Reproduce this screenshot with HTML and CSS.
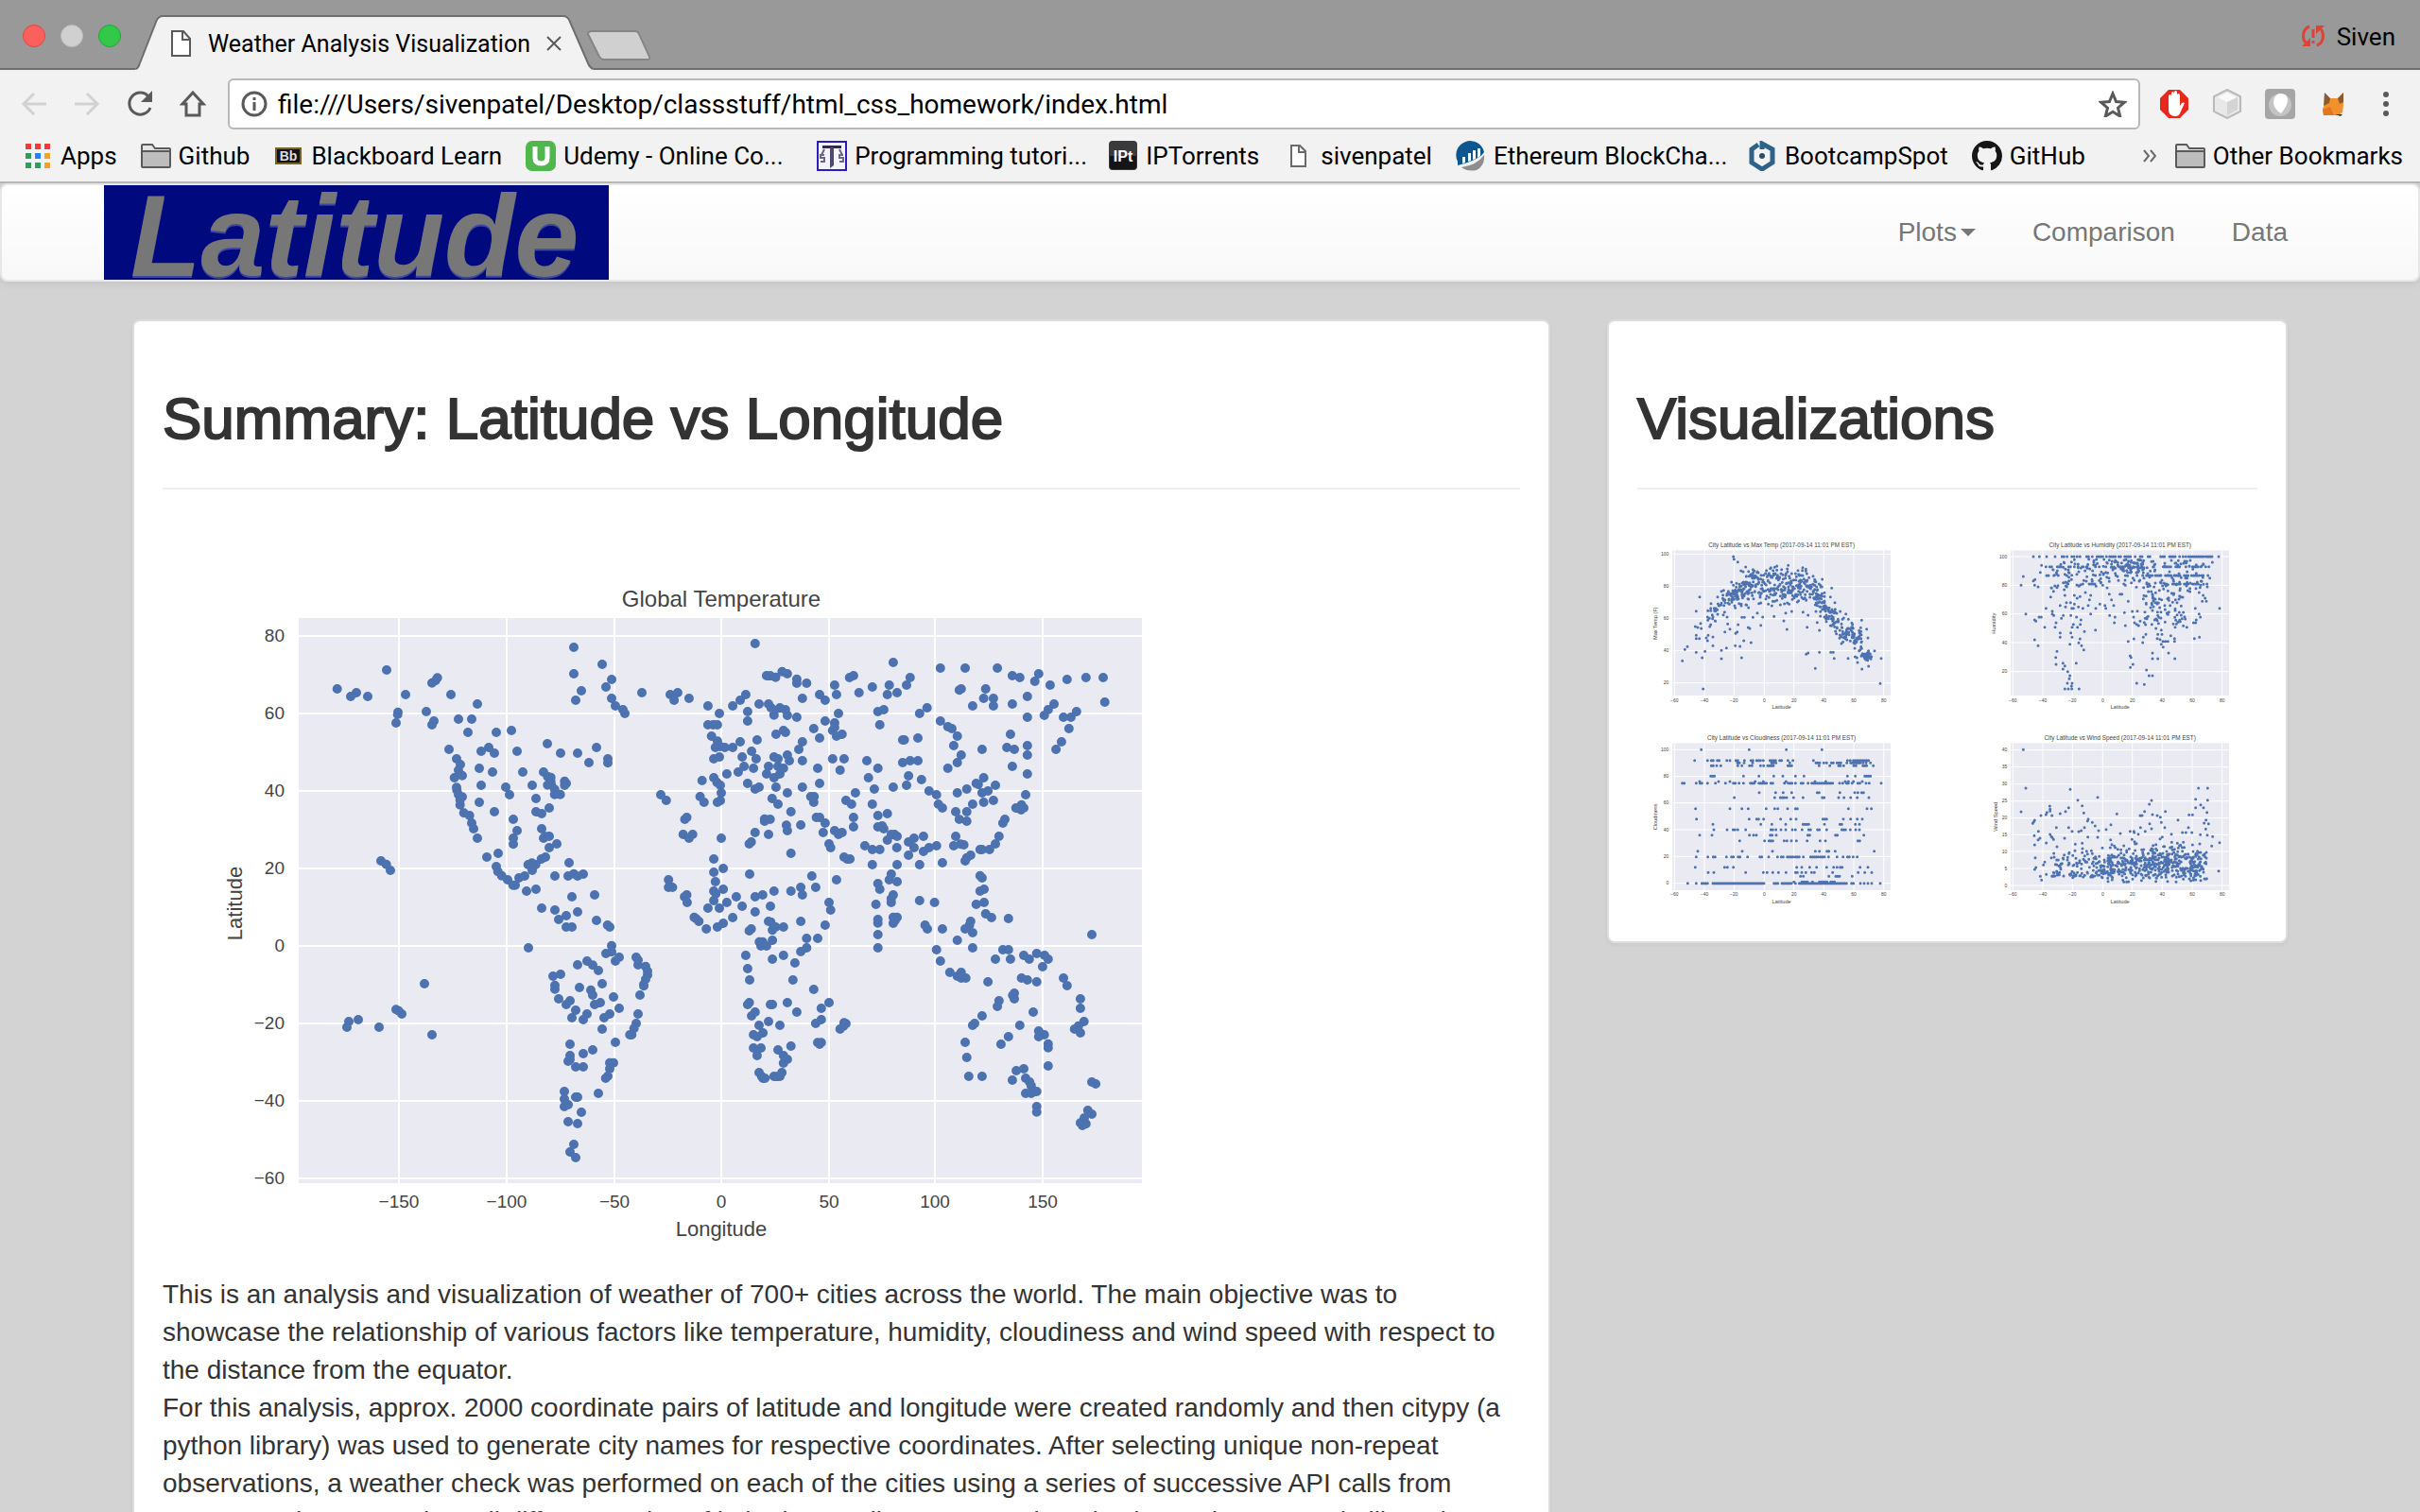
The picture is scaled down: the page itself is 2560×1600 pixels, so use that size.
FILE: index.html
```html
<!DOCTYPE html>
<html lang="en">
<head>
<meta charset="utf-8">
<title>Weather Analysis Visualization</title>
<link rel="stylesheet" href="styles.css">
</head>
<body>
<div class="window">
  <header class="chrome">
    <div class="tabbar">
      <div class="lights"><button class="light red" aria-label="Close window"></button><button class="light gray" aria-label="Minimize"></button><button class="light green" aria-label="Zoom"></button></div>
      <div class="tab">
        <svg class="tab-shape" viewBox="0 0 484 58" aria-hidden="true"><path d="M0 57Q3 56 4 52L22 6Q24 1 29 1H452Q457 1 459 6L479 52Q481 56 484 57V58H0Z" fill="#f2f2f2"/><path d="M0 57Q3 56 4 52L22 6Q24 1 29 1H452Q457 1 459 6L479 52Q481 56 484 57" fill="none" stroke="#6e6e6e" stroke-width="2"/></svg>
        <svg class="page-icon" viewBox="0 0 22 30" aria-hidden="true"><path d="M2 2h12l7 8v18H2zM13 2v9h8" fill="#fff" stroke="#5a5a5a" stroke-width="2"/></svg>
        <span class="tab-title">Weather Analysis Visualization</span>
        <button class="tab-close" aria-label="Close tab"><svg viewBox="0 0 16 16"><path d="M1 1l14 14M15 1L1 15" stroke="#5a5a5a" stroke-width="2"/></svg></button>
      </div>
      <button class="newtab" aria-label="New tab"><svg viewBox="0 0 68 32"><path d="M5 1h46q3 0 4 3l11 24q1 3-2 3H18q-3 0-5-3L1 4q0-3 4-3z" fill="#d0d0d0" stroke="#858585" stroke-width="2"/></svg></button>
      <button class="profile"><svg viewBox="0 0 26 24" aria-hidden="true"><g fill="none" stroke="#db4437" stroke-width="3"><path d="M9 2C1 5 1 16 6 20M17 22c8-3 8-14 3-18M13 5v9M13 17v3"/></g><path d="M1 23h9v-9zM25 1h-9v9z" fill="#db4437"/></svg>Siven</button>
    </div>
    <div class="toolbar">
      <div class="navbtns">
        <button aria-label="Back"><svg viewBox="0 0 28 28"><path d="M27 14H3M14 3L3 14l11 11" fill="none" stroke="#d2d2d2" stroke-width="3"/></svg></button>
        <button aria-label="Forward"><svg viewBox="0 0 28 28"><path d="M1 14h24M14 3l11 11-11 11" fill="none" stroke="#d2d2d2" stroke-width="3"/></svg></button>
        <button aria-label="Reload"><svg viewBox="0 0 28 28"><path d="M23 6A11.500 11.500 0 1 0 25 18" fill="none" stroke="#5a5a5a" stroke-width="3"/><path d="M27 0v12H15z" fill="#5a5a5a"/></svg></button>
        <button aria-label="Home"><svg viewBox="0 0 28 28"><path d="M14 2L3 14h4v12h14V14h4z" fill="none" stroke="#5a5a5a" stroke-width="3"/></svg></button>
      </div>
      <div class="omnibox">
        <svg class="info" viewBox="0 0 28 28" aria-hidden="true"><circle cx="14" cy="14" r="12" fill="none" stroke="#5a5a5a" stroke-width="3"/><path d="M14 12v9M14 7v3" stroke="#5a5a5a" stroke-width="3"/></svg>
        <input type="text" aria-label="Address" value="file:///Users/sivenpatel/Desktop/classstuff/html_css_homework/index.html">
        <button aria-label="Bookmark this page"><svg class="star" viewBox="0 0 30 28"><path d="M15 3l3.500 8.500 9 .7-7 6 2.200 8.800-7.700-4.700L7.300 27l2.200-8.800-7-6 9-.7z" fill="none" stroke="#5a5a5a" stroke-width="3"/></svg></button>
      </div>
      <div class="extensions">
        <button aria-label="Ad blocker"><svg viewBox="0 0 32 32"><path d="M10 1h12l9 9v12l-9 9H10l-9-9V10z" fill="#e8281e"/><path d="M10 17V8q0-2 1.500-2t1.500 2v7V5q0-2 1.500-2T16 5v9V4q0-2 1.500-2T19 4v11V7q0-2 1.500-2T22 7v11l2-3q1-1 3 0l-5 11q-1 3-5 3-7 0-7-7z" fill="#fff"/></svg></button>
        <button aria-label="Cube"><svg viewBox="0 0 32 32"><path d="M16 1l14 7v16l-14 7L2 24V8z" fill="#e8e8e8" stroke="#b9b9b9" stroke-width="2"/><path d="M16 4l10 5-10 5L6 9z" fill="#fafafa"/><path d="M16 14v14l11-6V9z" fill="#d4d4d4"/></svg></button>
        <button aria-label="Lens"><svg viewBox="0 0 32 32"><rect width="32" height="32" rx="4" fill="#a6a6a6"/><circle cx="16" cy="17" r="12" fill="#c4c4c4"/><path d="M15 5q8-1 9 6 0 7-7 15-7-4-8-11 0-8 6-10z" fill="#fff"/></svg></button>
        <button aria-label="Wallet"><svg viewBox="0 0 32 32"><path d="M7 4l6 6h8l6-6v13l-1 8-4 3H6l-1-7 3-6z" fill="#f0912d"/><path d="M7 4l6 6-1 5-6 3zM27 4l-6 6 2 6 4-2z" fill="#8a5a30"/><path d="M5 22l8-3 4 9H6z" fill="#e2761b"/><path d="M18 27h8l-2 2z" fill="#333"/></svg></button>
        <button aria-label="Menu"><svg viewBox="0 0 32 32"><g fill="#5a5a5a"><circle cx="16" cy="6" r="3"/><circle cx="16" cy="16" r="3"/><circle cx="16" cy="26" r="3"/></g></svg></button>
      </div>
    </div>
    <nav class="bookmarks" aria-label="Bookmarks">
      <a href="#apps"><svg viewBox="-2 -2 32 32"><path d="M1 1h6v6H1zM11 1h6v6h-6zM21 1h6v6h-6z" fill="#ef3b36"/><path d="M1 11h6v6H1zM1 21h6v6H1zM11 21h6v6h-6z" fill="#2f9e5b"/><path d="M11 11h6v6h-6z" fill="#2084f4"/><path d="M21 11h6v6h-6zM21 21h6v6h-6z" fill="#f0a22b"/></svg><span>Apps</span></a>
      <a href="#github"><svg viewBox="0 0 32 32"><path d="M1 27V5q0-1 1-1h10l3 4h15q1 0 1 1v18q0 1-1 1H2q-1 0-1-1z" fill="#e4e4e4" stroke="#5a5a5a" stroke-width="2"/><path d="M2 12h28v15H2z" fill="#bdbdbd"/><path d="M1 11h30" stroke="#5a5a5a" stroke-width="2"/></svg><span>Github</span></a>
      <a href="#bb"><svg viewBox="0 0 32 32"><path d="M2 7h28v18H2z" fill="#161310"/><path d="M3 8h26v16H3z" fill="none" stroke="#7a6226" stroke-width="2"/><text x="16" y="21" text-anchor="middle" class="bb">Bb</text></svg><span>Blackboard Learn</span></a>
      <a href="#udemy" class="clip"><svg viewBox="0 0 32 32"><rect width="32" height="32" rx="7" fill="#4fb74b"/><path d="M10 6v12q0 6 6.500 6t6.500-6V6" fill="none" stroke="#fff" stroke-width="5"/></svg><span>Udemy - Online Co...</span></a>
      <a href="#tutorials" class="clip"><svg viewBox="0 0 32 32"><path d="M1 1h30v30H1z" fill="#f4f4fa" stroke="#2b1cc0" stroke-width="2"/><path d="M6 5h20v3H6z" fill="#2f2b44"/><path d="M14 7h4v19l-4 3z" fill="#4e4a6a"/><path d="M8 9l-3 6M24 9l3 6M8 15H4v3h4v4H4M28 15h-4v3h4v4h-4" fill="none" stroke="#6a6788" stroke-width="2"/></svg><span>Programming tutori...</span></a>
      <a href="#ipt"><svg viewBox="0 0 32 32"><rect x="1" width="30" height="31" rx="4" fill="#3a3a3d"/><path d="M2 16h28v11q0 3-3 3H5q-3 0-3-3z" fill="#151517"/><text x="16" y="22" text-anchor="middle" class="ipt">IPt</text></svg><span>IPTorrents</span></a>
      <a href="#sivenpatel"><svg viewBox="0 0 32 32"><path d="M9 5h9l6 6v16H9zM17 5v7h7" fill="#fff" stroke="#6a6a6a" stroke-width="2"/></svg><span>sivenpatel</span></a>
      <a href="#eth" class="clip"><svg viewBox="0 0 32 32"><path d="M2 22A15 15 0 1 1 30 12Q25 20 2 26z" fill="#0d568f"/><path d="M6 28Q22 26 30 15 31 26 22 31 12 33 6 28z" fill="#8e8e90"/><path d="M7 24v-7h3v6zM13 22v-9h3v8zM18 20V10h3v9zM23 18V8h3v8z" fill="#fff"/></svg><span>Ethereum BlockCha...</span></a>
      <a href="#bootcamp"><svg viewBox="0 0 32 32"><path d="M12 4L5 9v14l11 7 11-7V9L16 3v6" fill="none" stroke="#2f6288" stroke-width="5"/><circle cx="16" cy="16" r="3" fill="#22506f"/></svg><span>BootcampSpot</span></a>
      <a href="#gh"><svg viewBox="0 0 16 16"><path fill="#161616" d="M8 0C3.580 0 0 3.580 0 8c0 3.540 2.290 6.530 5.470 7.590.4.070.55-.17.55-.38 0-.19-.01-.82-.01-1.490-2.010.37-2.530-.49-2.690-.94-.09-.23-.48-.94-.82-1.130-.28-.15-.68-.52-.01-.53.63-.01 1.080.58 1.230.82.72 1.210 1.870.87 2.330.66.07-.52.28-.87.51-1.070-1.780-.2-3.640-.89-3.640-3.950 0-.87.31-1.590.82-2.150-.08-.2-.36-1.020.08-2.120 0 0 .67-.21 2.200.82.64-.18 1.320-.27 2-.27s1.360.09 2 .27c1.530-1.040 2.200-.82 2.200-.82.44 1.100.16 1.920.08 2.120.51.56.82 1.270.82 2.150 0 3.070-1.870 3.750-3.650 3.950.29.25.54.73.54 1.480 0 1.070-.01 1.930-.01 2.200 0 .21.15.46.55.38A8.010 8.010 0 0 0 16 8c0-4.420-3.580-8-8-8z"/></svg><span>GitHub</span></a>
      <div class="other">
        <button aria-label="More bookmarks"><svg class="more" viewBox="0 0 14 14"><path d="M1 1l5 6-5 6M8 1l5 6-5 6" fill="none" stroke="#6a6a6a" stroke-width="2"/></svg></button>
        <a href="#other"><svg viewBox="0 0 32 32"><path d="M1 27V5q0-1 1-1h10l3 4h15q1 0 1 1v18q0 1-1 1H2q-1 0-1-1z" fill="#e4e4e4" stroke="#5a5a5a" stroke-width="2"/><path d="M2 12h28v15H2z" fill="#bdbdbd"/><path d="M1 11h30" stroke="#5a5a5a" stroke-width="2"/></svg><span>Other Bookmarks</span></a>
      </div>
    </nav>
  </header>

  <div class="page">
    <nav class="navbar" aria-label="Site">
      <div class="container">
        <a class="brand" href="#home">Latitude</a>
        <div class="links">
          <button class="navlink">Plots<span class="caret"></span></button>
          <a class="navlink" href="#comparison">Comparison</a>
          <a class="navlink" href="#data">Data</a>
        </div>
      </div>
    </nav>
    <main class="container grid">
      <section class="card">
        <h2>Summary: Latitude vs Longitude</h2>
        <hr>
        <svg class="chart" id="map" viewBox="0 0 1152 792" role="img" aria-label="Global Temperature"></svg>
        <p>This is an analysis and visualization of weather of 700+ cities across the world. The main objective was to showcase the relationship of various factors like temperature, humidity, cloudiness and wind speed with respect to the distance from the equator.<br>
        For this analysis, approx. 2000 coordinate pairs of latitude and longitude were created randomly and then citypy (a python library) was used to generate city names for respective coordinates. After selecting unique non-repeat observations, a weather check was performed on each of the cities using a series of successive API calls from Open Weather Map. The call different series of latitude coordinates were plotted using python's Matplotlib and Seaborn.</p>
      </section>
      <aside class="card">
        <h2>Visualizations</h2>
        <hr>
        <div class="thumbs">
          <a href="#temp"><svg class="chart" id="temp" viewBox="0 0 894 612" role="img" aria-label="Max temperature plot"></svg></a>
          <a href="#humidity"><svg class="chart" id="humidity" viewBox="0 0 894 612" role="img" aria-label="Humidity plot"></svg></a>
          <a href="#cloud"><svg class="chart" id="cloud" viewBox="0 0 894 612" role="img" aria-label="Cloudiness plot"></svg></a>
          <a href="#wind"><svg class="chart" id="wind" viewBox="0 0 894 612" role="img" aria-label="Wind speed plot"></svg></a>
        </div>
      </aside>
    </main>
  </div>
</div>
<script src="charts.js"></script>
</body>
</html>
```

FILE: styles.css
```css
* { box-sizing: border-box; }
body { margin: 0; font-family: "Liberation Sans", Arial, sans-serif; color: #333; background: #d3d3d3; }
button { border: 0; padding: 0; background: none; font: inherit; color: inherit; display: flex; align-items: center; }
a { color: inherit; text-decoration: none; }
svg { display: block; flex: none; }
.window { height: 100vh; overflow: hidden; display: flex; flex-direction: column; }

/* browser frame */
.chrome { flex: none; background: #f2f2f2; border-bottom: 2px solid #b6b6b6; font-family: Roboto, sans-serif; color: #000; }
.tabbar { display: flex; height: 74px; background: #999; border-bottom: 2px solid #6e6e6e; padding: 0 26px 0 24px; }
.lights { display: flex; gap: 16px; align-items: center; width: 118px; height: 76px; flex: none; }
.light { width: 24px; height: 24px; border-radius: 50%; border: 1px solid; }
.red { background: #fc605b; border-color: #de4843; }
.gray { background: #d0d0d0; border-color: #bcbcbc; }
.green { background: #34c84a; border-color: #1fa833; }
.tab { position: relative; display: flex; align-items: center; width: 487px; height: 58px; margin-top: 16px; padding: 2px 0 0 38px; flex: none; font-size: 25px; }
.tab-shape { position: absolute; left: 0; top: 0; width: 100%; height: 58px; }
.page-icon, .tab-title, .tab-close { position: relative; }
.page-icon { width: 22px; height: 30px; }
.tab-title { width: 358px; margin-left: 18px; white-space: nowrap; }
.tab-close svg { width: 16px; height: 16px; }
.newtab { align-self: flex-start; margin-top: 32px; }
.newtab svg { width: 68px; height: 32px; margin-left: -8px; }
.profile { margin-left: auto; gap: 12px; font-size: 26px; height: 78px; }
.profile svg { width: 26px; height: 24px; margin-bottom: 2px; }
.toolbar { display: flex; align-items: center; gap: 20px; height: 72px; padding: 0 20px 0 22px; }
.navbtns { display: flex; gap: 28px; width: 199px; }
.navbtns svg { width: 28px; height: 28px; }
.omnibox { flex: 1; display: flex; align-items: center; height: 54px; border: 2px solid #b8b8b8; border-radius: 6px; background: #fff; padding: 0 12px; }
.info { width: 28px; height: 28px; }
.omnibox input { flex: 1; min-width: 0; border: 0; outline: 0; padding: 0 0 0 11px; background: none; font: 28px Roboto, sans-serif; color: #000; }
.star { width: 30px; height: 28px; }
.extensions { display: flex; gap: 24px; }
.extensions svg { width: 32px; height: 32px; }
.bookmarks { display: flex; align-items: center; gap: 25px; height: 46px; padding: 0 18px 8px 24px; font-size: 26px; }
.bookmarks a { display: flex; align-items: center; gap: 8px; white-space: nowrap; }
.bookmarks svg { width: 32px; height: 32px; }
.bookmarks .clip span { width: 243px; }
.bookmarks .more { width: 14px; height: 14px; }
.other { display: flex; align-items: center; gap: 20px; margin-left: auto; }
.bb { font: bold 14px "Liberation Sans", sans-serif; fill: #ddd; }
.ipt { font: bold 16px "Liberation Sans", sans-serif; fill: #fff; }

/* site */
.page { flex: 1; min-height: 0; overflow: hidden; }
.container { width: 100%; max-width: 2340px; margin: 0 auto; }
.navbar { height: 104px; border: 2px solid #e7e7e7; border-radius: 8px; background: linear-gradient(#fff, #f8f8f8); box-shadow: 0 2px 10px rgba(0, 0, 0, .08); color: #777; text-shadow: 0 2px 0 rgba(255, 255, 255, .25); margin-bottom: 40px; }
.navbar .container { display: flex; justify-content: space-between; height: 100px; }
.brand { padding: 0 32px 0 28px; background: #000a7e; font-size: 122px; line-height: 108px; font-weight: bold; font-style: italic; }
.links { display: flex; }
.navlink { display: flex; align-items: center; padding: 0 30px; font-size: 28px; }
.caret { width: 16px; margin-left: 4px; border: 8px solid transparent; border-bottom: 0; border-top-color: #777; }
.grid { display: grid; grid-template-columns: minmax(0, 1500fr) minmax(0, 720fr); column-gap: 60px; align-items: start; padding: 0 30px; }
.card { background: #fff; border: 2px solid #ddd; border-radius: 8px; padding: 30px; box-shadow: 0 2px 4px rgba(0, 0, 0, .05); }
h2 { margin: 40px 0; font-size: 62px; line-height: 66px; font-weight: normal; -webkit-text-stroke: 2px #333; }
hr { margin: 0 0 40px; border: 0; border-top: 2px solid #eee; }
.chart { width: 100%; height: auto; }
#map { max-width: 1152px; }
p { margin: 0; font-size: 28px; line-height: 40px; }
.thumbs { display: grid; grid-template-columns: 1fr 1fr; column-gap: 60px; }

.plot { fill: #eaeaf2; }
.gridlines { stroke: #fff; stroke-width: 3; fill: none; }
.dots { stroke: #4c72b0; stroke-width: 9; stroke-linecap: round; fill: none; }
#map .dots { stroke-width: 10; }
#map .gridlines { stroke-width: 2; }
.chart text { fill: #444; font-size: 15px; }
.chart .label { font-size: 17px; }
.chart .title { font-size: 19px; }
#map text { font-size: 19px; }
#map .label { font-size: 22px; }
#map .title { font-size: 24px; }
```

FILE: charts.js
```js
// Each panel holds "x,y" pairs with the origin and scale that place it in the chart.
const mapPanels = [
  { ox: 48, oy: 42, sx: 1 / 3, sy: 1 / 3, pts: `410,387 453,411 471,399 507,411 567,327 627,405 603,461 602,468 597,495 711,368 728,352 722,361 771,405 855,435 693,459 717,489 711,501 795,483 837,483 825,525 915,525 963,519 765,579 789,609 801,627 795,645 807,662 782,669 867,585 891,573 909,591 981,585 861,639 903,651 999,651 867,693 861,747 909,777 789,700 790,708 795,722 807,730 800,740 800,755 812,781 830,789 837,813 843,831 855,861 945,699 957,723 1029,693 1041,735 1041,777 1059,783 1083,765 1065,651 1078,665 1088,668 1088,680 1078,692 1090,692 1100,706 1100,722 1118,722 1132,680 1137,687 1132,693 969,801 981,837 969,861 969,880 1059,831 1065,861 1070,855 1083,855 1083,891 1107,879 885,921 921,909 915,951 920,967 932,980 951,993 968,1010 975,1010 987,987 1005,981 1016,945 1028,940 1040,945 1028,953 1029,963 1058,927 1071,921 1011,1029 1041,1023 1146,939 1101,981 1143,981 1161,974 1173,981 1191,975 1155,1047 1227,1041 1059,1083 1101,1089 1173,1095 1113,1119 1137,1107 1137,1143 1155,1143 1233,1122 1268,1137 1275,1143 1077,561 1119,591 1173,591 1233,573 1209,621 1269,609 1269,622 1161,255 1251,309 1161,339 1281,357 1263,381 1185,393 1167,423 1281,417 1293,441 1317,453 1323,465 1377,399 549,933 566,944 579,963 1437,723` },
  { ox: 528, oy: 42, sx: .3444, sy: 1 / 3, pts: `14,741 26,405 49,399 38,423 84,417 287,243 142,441 177,465 218,441 241,423 258,405 264,459 264,489 322,345 333,345 350,350 370,332 386,339 415,356 415,369 445,369 432,417 299,435 328,435 336,447 345,459 345,470 363,447 380,453 386,471 415,477 485,405 502,423 531,375 537,405 577,351 589,345 606,399 647,381 711,303 699,375 693,405 723,399 752,375 763,351 664,459 682,453 670,501 792,465 815,447 856,321 932,321 1031,321 914,391 920,387 955,441 989,417 995,387 1019,417 1019,441 1077,345 1100,351 1077,435 1146,363 1158,339 1123,411 1123,477 1193,375 1245,357 1303,351 1356,351 1361,429 1205,435 1187,453 1175,471 1234,477 1257,477 1274,459 1251,513 1228,555 1211,579 142,501 158,501 171,501 153,537 171,553 165,573 180,570 194,573 218,573 241,555 293,549 160,609 177,603 247,603 276,585 290,609 253,633 282,639 235,651 200,657 160,669 170,684 180,693 183,717 180,742 171,747 124,678 118,729 130,747 264,687 287,705 299,699 351,531 374,519 380,525 345,603 357,609 386,597 392,615 328,633 357,633 374,639 322,657 345,669 363,657 351,699 386,717 432,555 421,579 432,615 432,699 467,513 485,543 502,489 543,465 531,495 525,519 531,509 537,537 554,531 525,609 560,609 548,645 479,639 485,687 630,615 664,639 635,669 653,705 595,717 566,741 583,753 740,549 745,549 787,543 740,621 763,615 787,615 758,663 752,693 711,699 798,675 821,711 844,723 647,753 856,489 879,507 891,513 908,537 897,567 920,597 908,621 879,639 984,579 1071,531 1060,573 1083,579 1123,567 1123,597 1077,633 1123,657 1118,723 1088,765 1105,755 1112,765 1104,771 1054,801 1048,813 339,735 357,753 458,729 468,729 467,747 397,777 316,800 316,807 333,801 383,820 386,837 427,819 287,843 328,849 275,873 269,879 397,909 475,795 485,795 502,813 496,843 589,795 589,825 531,837 543,849 554,843 514,879 519,891 560,921 569,927 578,927 537,993 664,789 693,783 664,825 677,822 682,831 705,849 715,849 723,855 693,867 722,891 624,885 647,897 670,897 758,873 775,861 775,891 804,855 758,915 804,903 821,891 844,885 647,945 723,945 792,945 862,939 850,753 862,765 908,717 937,705 966,687 972,690 989,669 984,717 1002,711 1025,693 989,747 1019,741 955,753 903,777 937,777 914,801 937,807 903,855 897,885 918,880 928,882 932,933 937,923 949,915 978,897 984,897 1007,897 1025,879 1036,855 77,795 71,801 66,849 84,861 95,849 183,861 21,993 21,1017 33,1017 77,1041 70,1047 78,1065 100,1112 106,1117 114,1125 137,1149 171,1143 189,1131 218,1113 160,927 189,957 160,969 165,999 160,1029 166,1037 189,1023 160,1059 142,1083 177,1083 200,1065 229,1047 247,1077 270,975 287,1047 310,1041 345,1029 397,1029 427,1017 432,1041 461,981 473,1017 334,1077 287,1095 514,1065 519,1089 502,1137 427,1125 275,1149 269,1155 328,1125 335,1127 350,1143 340,1153 374,1143 340,1185 300,1190 310,1190 445,1179 479,1179 664,1005 670,1023 658,1071 664,1119 664,1130 664,1167 705,975 699,993 723,999 711,1041 705,1053 705,1065 711,1112 723,1112 717,1122 711,1131 792,1059 838,1065 809,1137 816,1149 862,1149 978,980 984,987 978,1029 990,1023 966,1071 990,1065 995,1101 1013,1113 1065,1116 949,1125 945,1137 932,1149 955,1161 908,1185 1321,1167` },
  { ox: 48, oy: 402, sx: 1 / 3, sy: 1 / 3, pts: `1017,129 1281,122 1281,142 1263,147 1305,159 1293,171 1203,171 1173,183 1221,184 1239,201 1359,159 1365,168 1365,183 1389,188 1395,203 1395,215 1389,229 1383,245 1383,250 1371,279 1095,219 1119,213 1101,248 1101,260 1179,255 1215,263 1221,279 1251,243 1113,291 1149,297 1137,309 1227,309 1245,303 1287,285 1305,321 1167,327 1155,351 1203,339 1191,357 1257,351 1275,339 1251,387 1365,339 1359,369 1352,385 1345,405 1339,405 1293,429 1149,435 1191,465 1221,453 1149,471 1149,483 1143,489 1167,507 1191,507 1275,494 1287,494 1275,513 1269,536 1262,543 1239,591 1131,585 1131,609 1131,633 1143,627 1167,603 1173,603 1185,651 1143,681 1173,687 1161,753 1149,777 1167,795 687,243 597,325 605,329 615,339 477,357 447,363 441,381 543,381 711,405` },
  { ox: 528, oy: 402, sx: .3444, sy: 1 / 3, pts: `258,153 264,195 270,231 305,123 322,123 340,165 374,153 409,177 427,141 445,129 403,231 467,261 269,303 264,309 287,333 276,345 334,309 340,309 386,303 415,333 514,303 490,321 490,357 473,369 328,363 363,375 299,375 311,399 282,405 293,411 282,447 305,447 293,471 397,441 357,453 374,471 386,483 374,495 299,525 307,537 311,543 317,543 345,537 355,537 363,537 369,525 479,430 490,430 485,435 560,367 566,370 558,378 548,387 664,129 844,135 856,171 885,207 908,219 920,207 920,225 934,225 1002,237 955,129 1025,165 1048,135 1065,135 1071,165 1112,153 1129,165 1152,147 1176,153 1187,165 1170,189 1105,225 1123,231 1152,237 1234,225 1245,249 1083,273 1078,280 1083,291 1036,297 1031,315 984,345 961,369 955,375 1141,333 1100,375 1065,411 1042,435 1158,393 1175,405 1158,411 1187,434 1187,446 932,429 937,477 943,537 984,537 1187,504 1089,519 1112,513 1077,549 1118,543 1130,555 1135,567 1118,591 1135,591 1152,585 1152,633 1152,650 1286,291 1286,321 1297,363 1280,377 1268,387 1286,399 1321,555 1333,561 1309,645 1321,657 1298,669 1286,685 1292,693 1303,688` }
];
const tempPanel = { ox: -126, oy: -56, sx: 1, sy: 1, pts: `431,149 433,157 445,166 470,182 455,194 462,197 324,277 381,277 393,259 313,322 313,399 310,371 318,374 327,361 329,377 313,409 323,409 277,444 285,435 269,480 313,453 332,470 341,450 335,569 345,407 351,399 349,416 366,432 366,404 349,341 365,346 359,365 371,321 378,317 381,332 385,305 399,334 411,341 393,447 393,473 409,439 404,388 420,379 413,363 437,432 452,434 457,470 464,416 487,422 438,393 443,388 478,374 483,377 446,365 458,342 466,342 493,342 518,367 524,341 507,328 560,339 597,328 591,353 601,380 616,323 652,325 668,335 665,373 697,358 704,383 691,504 662,459 668,455 704,453 740,453 748,453 751,472 795,472 839,506 860,497 825,485 817,467 823,470 900,472 897,552 879,448 743,249 713,221 684,211 712,245 703,236 707,240 739,277 753,295 770,323 788,331 838,351 854,379 858,407 550,184 536,193 557,193 559,203 564,203 552,211 527,208 598,203 616,203 628,203 651,184 636,193 650,193 664,203 472,211 487,205 491,217 477,233 506,215 518,220 463,230 425,230 431,240 451,245 464,236 429,257 415,259` };
const windPanel = { ox: -90, oy: -668, sx: 1, sy: 1, pts: `241,762 249,884 390,888 477,913 414,922 428,940 385,946 325,941 326,951 326,957 316,961 313,968 297,971 332,971 358,965 375,958 433,963 234,959 277,986 274,991 271,996 447,982 445,988 460,993 469,1004 480,1019 519,1000 504,1015 538,966 648,923 641,935 626,958 612,971 618,971 651,968 666,971 676,976 692,958 679,993 642,997 648,1013 613,1009 690,1009 628,1021 592,1021 580,1021 549,1028 797,884 826,884 826,922 788,919 804,937 813,946 788,946 767,969 778,969 824,961 821,985 815,995 829,997 820,1014 803,1032 825,1033 842,1038 864,1057 839,1068 861,1147 732,985 765,1009 746,1025 757,1025 776,1025 711,1030 346,1009 385,1009 435,1009 417,1022 425,1019 396,1021 289,1021 276,1035 294,1043 288,1048 277,1064 279,1105 281,1136 277,1142 309,1119 305,1128 295,1164 299,1176 314,1158 326,1031 330,1038 337,1047 314,1058` };
const humidityPanel = { ox: -90, oy: -56, sx: 1, sy: 1, pts: `241,212 234,240 277,240 273,226 278,222 288,245 295,199 299,177 249,331 313,313 333,322 333,331 338,336 291,341 298,341 277,350 281,354 309,373 345,359 342,373 358,391 358,405 277,413 288,432 348,450 344,469 345,491 367,487 373,496 367,506 382,514 389,527 387,537 381,551 396,551 394,560 373,569 384,569 395,569 418,569 409,487 433,445 426,432 417,423 421,410 435,387 470,382 389,427 396,405 392,391 396,373 400,364 413,373 424,350 422,364 410,341 392,336 368,336 362,345 455,331 471,313 484,300 500,304 503,313 515,336 532,341 530,359 565,368 562,327 591,341 587,323 603,322 594,359 601,364 607,368 612,354 628,345 574,418 592,410 580,464 583,469 589,491 581,501 632,509 601,551 625,555 640,527 651,527 651,473 668,473 702,455 722,473 651,455 685,436 679,427 620,422 622,405 630,396 666,409 675,412 684,418 692,418 700,418 721,418 721,409 709,400 681,396 668,396 679,382 662,377 723,373 760,373 784,409 800,405 803,341 799,331 790,350 781,359 788,359 787,313 822,291 809,291 818,281 812,272 864,313 841,167 861,149 770,260 799,263 825,245 833,217 328,277 331,249 337,259 358,304 375,309 378,295 373,272 371,254 386,226 383,236 391,295 395,313 403,300 400,313 416,309 430,313 403,272 412,281 421,276 438,263 451,286 455,272 447,304 514,268 521,286 548,268 554,268 528,304 574,291` };
const cloudPanel = { ox: -126, oy: -668, sx: 1, sy: 1, pts: '' };

// Repeatable pseudo-random source for the dense part of each plot.
let seed = 7;
const rnd = () => (seed = (seed * 16807) % 2147483647) / 2147483647;
const bell = () => (rnd() + rnd() + rnd()) * 2 / 3 - 1;
const scatter = (n, fn) => Array.from({ length: n }, fn).map(p => p.map(Math.round).join(',')).join(' ');
const row = (y, xs) => ' ' + xs.split(' ').map(s => {
  const [a, b] = s.split('-').map(Number), out = [];
  for (let x = a; x <= (b || a); x += 6) out.push(x + ',' + y);
  return out.join(' ');
}).join(' ');

const curve = [[345, 360], [405, 290], [450, 262], [500, 240], [560, 242], [640, 240], [690, 265], [740, 330], [780, 385], [830, 410], [872, 460]];
const mid = x => {
  const i = Math.max(1, curve.findIndex(c => c[0] >= x));
  const [a, b] = [curve[i - 1], curve[i]];
  return a[1] + (b[1] - a[1]) * (x - a[0]) / (b[0] - a[0]);
};
tempPanel.pts += ' ' + scatter(90, () => { const x = 350 + rnd() * 120; return [x, mid(x) + bell() * 52]; })
  + ' ' + scatter(240, () => { const x = 470 + rnd() * 200; return [x, mid(x) + bell() * 76]; })
  + ' ' + scatter(200, () => { const x = 670 + rnd() * 170; return [x, mid(x) + bell() * 62]; })
  + ' ' + scatter(45, () => [855 + bell() * 22, 463 + bell() * 22]);
windPanel.pts += ' ' + scatter(150, () => [330 + rnd() * 200, 1168 - Math.abs(bell()) * 150])
  + ' ' + scatter(380, () => [510 + rnd() * 312, 1165 - rnd() * 45 - Math.abs(bell()) * 105])
  + ' ' + scatter(90, () => [480 + rnd() * 345, 1140 + rnd() * 42]);
humidityPanel.pts += row(149, '273 292 315 342 364 370 380 395 402 412 421 442-452 460 475-493 505 515-535 544-554 563-584 596 612-618 637-648 677-693 705-726 737 748 757 766-818 822-840')
  + row(181, '313 325-334 349-363 385 391 403 415 428 470 482 503 545-557 580 590 602 655 685-709 725-738 757-762 778-800 805 820 830')
  + row(209, '315-321 338 352 379 470 535 565 602 620 632-652 660-682 692-712 720-740 752-766 775-800 812 827')
  + row(236, '430 450-470 560 640 690-698 715-742 752-765 778-796 824')
  + ' ' + scatter(75, () => [325 + rnd() * 180, 155 + rnd() * 95])
  + ' ' + scatter(90, () => [500 + rnd() * 125, 158 + Math.abs(bell()) * 110])
  + ' ' + scatter(85, () => [620 + rnd() * 205, 160 + rnd() * 100])
  + ' ' + scatter(85, () => [620 + rnd() * 135, 258 + rnd() * 115]);
cloudPanel.pts = (row(762, '329 481 599 712') + row(796, '308 349 361-371 380-388 410 420 439-450 466 487-493 505-517 526 547-568 578-586 604 620 685 793 802 812-864')
  + row(804, '444-452 465 492 552-558 566 610 693-708 718 727 742-748 760 766-776 791 803-836 842 852 866') + row(813, '361-367 378 391 445 458 482 490 517 527 540-562 604-618 703 737 765-771 781 813 820 842-858 875')
  + row(846, '359-371 463 512 559 588 628 655 793 818 848-866') + row(863, '324 384 420 500 526 598 690 724 786 796 812 840')
  + row(868, '269-278 313 325-334 349 374 406 431-438 449 463 485-497 512-536 550-560 593 605-620 628 646-656 668 680-750 768 778 790-800 808 826-834 852 862 900')
  + row(898, '513 565 589 616 697-703 769 816 826 838-844') + row(914, '434 562 580-592 600 622 652 713-719 765 782 803 824 861')
  + row(949, '311 420 458 478 535 562 572 603 628-638 796 855 869') + row(982, '314 481 505-513 527 581 613 630 715-727 780 803 824 840')
  + row(999, '366 518 553 597 652-672 720 769-778 818 831') + row(1016, '369 411 430-436 445 470 550-556 566 582 597 618 628 649 670-680 698 704 727-732 775-788 802 819 831')
  + row(1033, '324 363 482 495 504 548-556 567 667-674 755-761 845') + row(1051, '451 530 544-558 592 601 615 631 665 706 723 826-832')
  + row(1084, '318 459 555 691 704 728-734 754 878') + row(1102, '313 350 367-375 409 425-431 446-452 476 515-525 543 571 583-589 602 608-620 628-640 653 676-700 708-722 733 760 779 793-800 811 824')
  + row(1135, '310 403 412 431 632 648 673 695 727 749 760 770-776 833 858') + row(1152, '351 369 470 526 538 556 574 598 628-636 648 661 679 688 746 827 848 870')
  + row(1164, '644 653 734 756-768 808') + row(1182, '623 648-668 682 704-730 740-754')
  + row(1186, '286 313 331-350 366-528 560-576 585-620 628 640-794 806 812 834 846 858 870 897')).trim();

const latX = [['−60', 118], ['−40', 213], ['−20', 307], ['0', 403], ['20', 497], ['40', 592], ['60', 687], ['80', 782]];
const top2 = { plot: [111, 73, 693, 461], x: latX, tickY: 554, xlabel: 'Latitude', xlabelPos: [458, 576], tickX: 100, ylabelX: 62, shift: 5 };
const low2 = { ...top2, plot: [111, 73, 693, 467], tickY: 559, xlabelPos: [458, 581] };
const stamp = ' (2017-09-14 11:01 PM EST)';

function draw(id, c) {
  const [x, y, w, h] = c.plot;
  const line = c.x.map(t => `M${t[1]} ${y}v${h}`).join('') + c.y.map(t => `M${x} ${t[1]}h${w}`).join('');
  const dots = c.panels.map(p => p.pts.trim().split(/\s+/).map(s => {
    const [a, b] = s.split(',').map(Number);
    return `M${(p.ox + a * p.sx).toFixed(1)} ${(p.oy + b * p.sy).toFixed(1)}h0`;
  }).join('')).join('');
  document.getElementById(id).innerHTML =
    `<rect class="plot" x="${x}" y="${y}" width="${w}" height="${h}"/><path class="gridlines" d="${line}"/><path class="dots" d="${dots}"/>` +
    `<text class="title" text-anchor="middle" x="${c.titlePos[0]}" y="${c.titlePos[1]}">${c.title}</text>` +
    c.x.map(t => `<text text-anchor="middle" x="${t[1]}" y="${c.tickY}">${t[0]}</text>`).join('') +
    c.y.map(t => `<text text-anchor="end" x="${c.tickX}" y="${t[1] + c.shift}">${t[0]}</text>`).join('') +
    `<text class="label" text-anchor="middle" x="${c.xlabelPos[0]}" y="${c.xlabelPos[1]}">${c.xlabel}</text>` +
    `<text class="label" text-anchor="middle" transform="translate(${c.ylabelX} ${c.ylabelY}) rotate(-90)">${c.ylabel}</text>`;
}

draw('map', {
  plot: [144, 96, 892, 598], title: 'Global Temperature', titlePos: [591, 84], panels: mapPanels,
  x: [['−150', 250], ['−100', 364], ['−50', 478], ['0', 591], ['50', 705], ['100', 817], ['150', 931]],
  y: [['80', 115], ['60', 197], ['40', 279], ['20', 361], ['0', 443], ['−20', 525], ['−40', 607], ['−60', 689]],
  tickX: 129, tickY: 720, shift: 6, xlabel: 'Longitude', xlabelPos: [591, 750], ylabel: 'Latitude', ylabelX: 84, ylabelY: 398
});
draw('temp', { ...top2, title: 'City Latitude vs Max Temp' + stamp, titlePos: [458, 63], panels: [tempPanel], ylabel: 'Max Temp (F)', ylabelY: 305,
  y: [['100', 85], ['80', 188], ['60', 290], ['40', 392], ['20', 494]] });
draw('humidity', { ...top2, title: 'City Latitude vs Humidity' + stamp, titlePos: [458, 63], panels: [humidityPanel], ylabel: 'Humidity', ylabelY: 305,
  y: [['100', 93], ['80', 184], ['60', 275], ['40', 366], ['20', 458]] });
draw('cloud', { ...low2, title: 'City Latitude vs Cloudiness' + stamp, titlePos: [458, 63], panels: [cloudPanel], ylabel: 'Cloudiness', ylabelY: 307,
  y: [['100', 94], ['80', 179], ['60', 263], ['40', 348], ['20', 433], ['0', 518]] });
draw('wind', { ...low2, title: 'City Latitude vs Wind Speed' + stamp, titlePos: [458, 63], panels: [windPanel], ylabel: 'Wind Speed', ylabelX: 70, ylabelY: 307,
  y: [['40', 95], ['35', 149], ['30', 203], ['25', 257], ['20', 311], ['15', 364], ['10', 417], ['5', 471], ['0', 525]] });
```
